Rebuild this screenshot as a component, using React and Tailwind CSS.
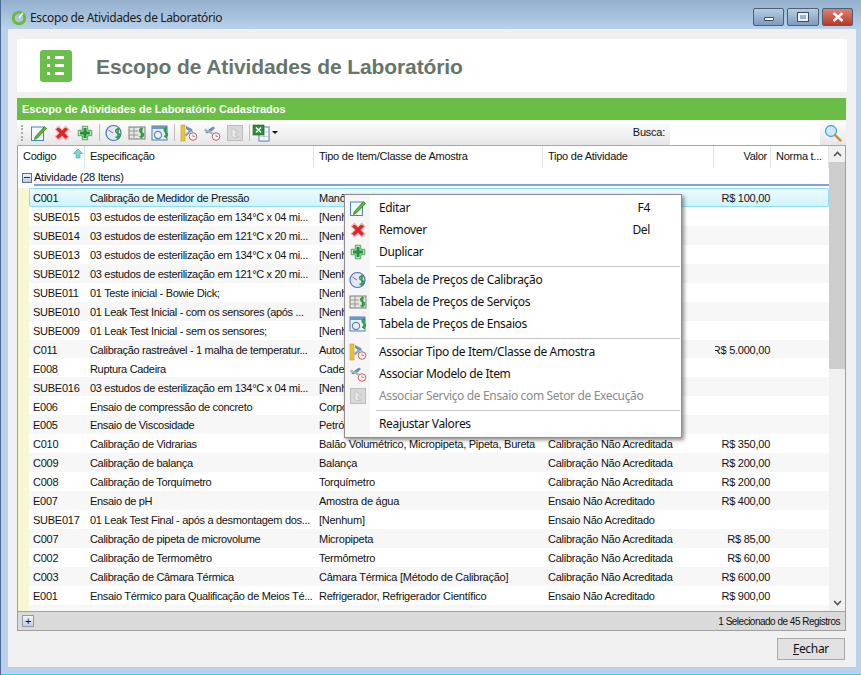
import React from 'react';

const rows = [
  ['C001', 'Calibração de Medidor de Pressão', 'Manômetro', 'Calibração Não Acreditada', 'R$ 100,00'],
  ['SUBE015', '03 estudos de esterilização em 134°C x 04 mi...', '[Nenhum]', '', ''],
  ['SUBE014', '03 estudos de esterilização em 121°C x 20 mi...', '[Nenhum]', '', ''],
  ['SUBE013', '03 estudos de esterilização em 134°C x 04 mi...', '[Nenhum]', '', ''],
  ['SUBE012', '03 estudos de esterilização em 121°C x 20 mi...', '[Nenhum]', '', ''],
  ['SUBE011', '01 Teste inicial - Bowie Dick;', '[Nenhum]', '', ''],
  ['SUBE010', '01 Leak Test Inicial - com os sensores (após ...', '[Nenhum]', '', ''],
  ['SUBE009', '01 Leak Test Inicial - sem os sensores;', '[Nenhum]', '', ''],
  ['C011', 'Calibração rastreável - 1 malha de temperatur...', 'Autoclave', '', 'R$ 5.000,00'],
  ['E008', 'Ruptura Cadeira', 'Cadeira', '', ''],
  ['SUBE016', '03 estudos de esterilização em 134°C x 04 mi...', '[Nenhum]', '', ''],
  ['E006', 'Ensaio de compressão de concreto', 'Corpo de Prova', '', ''],
  ['E005', 'Ensaio de Viscosidade', 'Petróleo', '', ''],
  ['C010', 'Calibração de Vidrarias', 'Balão Volumétrico, Micropipeta, Pipeta, Bureta', 'Calibração Não Acreditada', 'R$ 350,00'],
  ['C009', 'Calibração de balança', 'Balança', 'Calibração Não Acreditada', 'R$ 200,00'],
  ['C008', 'Calibração de Torquímetro', 'Torquímetro', 'Calibração Não Acreditada', 'R$ 200,00'],
  ['E007', 'Ensaio de pH', 'Amostra de água', 'Ensaio Não Acreditado', 'R$ 400,00'],
  ['SUBE017', '01 Leak Test Final - após a desmontagem dos...', '[Nenhum]', 'Ensaio Não Acreditado', ''],
  ['C007', 'Calibração de pipeta de microvolume', 'Micropipeta', 'Calibração Não Acreditada', 'R$ 85,00'],
  ['C002', 'Calibração de Termomêtro', 'Termômetro', 'Calibração Não Acreditada', 'R$ 60,00'],
  ['C003', 'Calibração de Câmara Térmica', 'Câmara Térmica [Método de Calibração]', 'Calibração Não Acreditada', 'R$ 600,00'],
  ['E001', 'Ensaio Térmico para Qualificação de Meios Té...', 'Refrigerador, Refrigerador Científico', 'Ensaio Não Acreditado', 'R$ 900,00'],
  ['C006', 'Calibração de Microscópio Tipo', 'Microscópio Tipo', 'Calibração Não Acreditada', 'R$ 80,00'],
];

function EditIcon() {
  return (
    <svg width="18" height="18" viewBox="0 0 18 18">
      <rect x="1.5" y="3" width="12" height="13.5" fill="#f2f8fd" stroke="#4f86b8" />
      <path d="M5 13 L14.5 2.5 L16.5 4.5 L7 14.5 L4.5 15.5 Z" fill="#5cb531" stroke="#2e7d1b" strokeWidth="0.7" />
    </svg>
  );
}

function RemoveIcon() {
  return (
    <svg width="18" height="18" viewBox="-1 -1 20 20">
      <path d="M1.5 5 L5 1.5 L9 5.5 L13 1.5 L16.5 5 L12.5 9 L16.5 13 L13 16.5 L9 12.5 L5 16.5 L1.5 13 L5.5 9 Z" fill="#dd2428" stroke="#f3b1ae" strokeWidth="1.2" strokeLinejoin="round" />
    </svg>
  );
}

function AddIcon() {
  return (
    <svg width="18" height="18" viewBox="-1 -1 20 20">
      <path d="M6 1.5 H12 V6 H16.5 V12 H12 V16.5 H6 V12 H1.5 V6 H6 Z" fill="#c4e8c5" stroke="#3c8f49" strokeWidth="0.9" strokeLinejoin="round" />
      <path d="M7.3 3.5 H10.7 V7.3 H14.5 V10.7 H10.7 V14.5 H7.3 V10.7 H3.5 V7.3 H7.3 Z" fill="#23923a" />
    </svg>
  );
}

function CalibPriceIcon() {
  return (
    <svg width="18" height="18" viewBox="0 0 18 18">
      <circle cx="8.5" cy="9" r="7.5" fill="#dfe9f8" stroke="#4a73c2" strokeWidth="1.2" />
      <path d="M8 9 L3.5 6" stroke="#c2565a" strokeWidth="1" />
      <path d="M14.5 5.5 C11.5 4.5 10 6 11 8 C12 10 15 9 15 11.5 C15 13.5 12.5 14 10.5 13 M13 4 V15" fill="none" stroke="#2f9a43" strokeWidth="1.6" />
    </svg>
  );
}

function ServicePriceIcon() {
  return (
    <svg width="18" height="18" viewBox="0 0 18 18">
      <rect x="1" y="3" width="16" height="12" fill="#e6e6e2" stroke="#7d7d78" />
      <path d="M1 7 H10 M1 11 H10 M6 3 V15" stroke="#9a9a94" />
      <path d="M15 5 C12.5 4.5 11 5.5 12 7.5 C13 9 15.5 9 15.5 11 C15.5 13 13 13 11.5 12.5 M13.5 3.5 V14.5" fill="none" stroke="#2f9a43" strokeWidth="1.6" />
    </svg>
  );
}

function EnsaioPriceIcon() {
  return (
    <svg width="18" height="18" viewBox="0 0 18 18">
      <rect x="1" y="2" width="15" height="14" fill="#e9f1fa" stroke="#4e7db5" />
      <rect x="1" y="2" width="15" height="3" fill="#6d97c9" />
      <circle cx="7" cy="11" r="3.6" fill="none" stroke="#5c83bb" strokeWidth="1.2" />
      <path d="M16 4.5 C13.5 4 12.5 5.5 13.5 7 C14.5 8.5 16.5 8.5 16.5 10.5 C16.5 12 14.5 12.5 13 12 M15 3 V14" fill="none" stroke="#2f9a43" strokeWidth="1.5" />
    </svg>
  );
}

function ClockBadge() {
  return (
    <>
      <circle cx="13" cy="12.5" r="3.8" fill="#f4f4f4" stroke="#c9605e" strokeWidth="1" />
      <path d="M13 10.5 V12.5 H15" fill="none" stroke="#8a8a8a" strokeWidth="0.8" />
    </>
  );
}

function AssocTipoIcon() {
  return (
    <svg width="18" height="18" viewBox="0 0 18 18">
      <rect x="1" y="1" width="4" height="16" fill="#edc23b" stroke="#c79a24" strokeWidth="0.6" />
      <path d="M6 2 L12 5 L13 8 L9 7 L6 5 Z" fill="#6f8fb4" />
      <path d="M5.5 11.5 L10.5 7" stroke="#8fa7c4" strokeWidth="2.4" />
      <ClockBadge />
    </svg>
  );
}

function AssocModeloIcon() {
  return (
    <svg width="18" height="18" viewBox="0 0 18 18">
      <path d="M2 8 L10 2.5 L12 4 L8.5 7.5 L4 9.5 Z" fill="#6f8fb4" />
      <path d="M1.5 5.5 L9.5 9.5" stroke="#a4b6cc" strokeWidth="2.4" />
      <ClockBadge />
    </svg>
  );
}

function AssocServicoIcon() {
  return (
    <svg width="18" height="18" viewBox="0 0 18 18">
      <rect x="1.5" y="1.5" width="15" height="15" fill="#d8d8d8" stroke="#bdbdbd" />
      <path d="M6 5 H9 V7 H12 V9 H9 V12 H12 V13.5 H7.5 L6 12 Z" fill="#ececec" stroke="#b5b5b5" strokeWidth="0.6" />
    </svg>
  );
}

function ExcelIcon() {
  return (
    <svg width="20" height="20" viewBox="0 0 20 20">
      <rect x="7" y="4" width="10" height="14" fill="#fff" stroke="#5a7ea8" />
      <path d="M12 4 V18 M7 9 H17 M7 13.5 H17" stroke="#a7bdd5" strokeWidth="0.7" />
      <rect x="1" y="2" width="11" height="10" fill="#2e8b3a" stroke="#1c6427" strokeWidth="0.6" />
      <path d="M4 4.5 L9 9.5 M9 4.5 L4 9.5" stroke="#fff" strokeWidth="1.4" />
    </svg>
  );
}

function Magnifier() {
  return (
    <svg width="18" height="18" viewBox="0 0 18 18">
      <circle cx="7" cy="7" r="5.5" fill="#cbeaf8" stroke="#4ba4cf" strokeWidth="1.3" />
      <path d="M11 11 L16.5 16.5" stroke="#c58a3a" strokeWidth="2.4" strokeLinecap="round" />
    </svg>
  );
}

function ToolSep() {
  return <div className="ml-[3px] mr-[2px] h-[17px] w-px bg-[#bdbdbd]" />;
}

function ToolBtn({ children }) {
  return <div className="flex w-[23px] items-center justify-center">{children}</div>;
}

function WinBtn({ children, className }) {
  return (
    <div className={'flex h-[18px] items-center justify-center rounded-[2px] border border-[#4f5f74] ' + className}>
      {children}
    </div>
  );
}

function MenuItem({ icon, label, shortcut, disabled }) {
  return (
    <div className="flex h-[22px] items-center">
      <div className="flex w-[26px] shrink-0 items-center justify-center">{icon}</div>
      <span className={'ml-[8px] flex-1 ' + (disabled ? 'text-[#8a8a8a]' : 'text-[#111]')}>{label}</span>
      {shortcut && <span className="mr-[31px] text-[#111]">{shortcut}</span>}
    </div>
  );
}

function MenuSep() {
  return (
    <div className="flex h-[6px] items-center">
      <div className="ml-[31px] h-px w-[304px] bg-[#c8c8c8]" />
    </div>
  );
}

export default function App() {
  return (
    <div className="flex h-[675px] w-[861px] flex-col overflow-hidden border-l border-[#4a6a94] bg-[#b9d1ea] font-['Liberation_Sans',sans-serif] text-[11px] tracking-[-0.25px] text-[#111]">
      {/* barra de titulo */}
      <div className="flex h-[29px] shrink-0 items-center bg-gradient-to-b from-[#93afcd] to-[#b9d1ea] pl-[10px] pr-[8px] pt-[7px]">
        <svg width="16" height="16" viewBox="0 0 16 16">
          <circle cx="8" cy="8" r="5.8" fill="none" stroke="#6dbb3c" strokeWidth="3" />
          <path d="M8 8 L12 3" stroke="#f4fbe9" strokeWidth="1.5" />
        </svg>
        <span className="ml-[3px] font-['Noto_Sans',sans-serif] text-[12px] tracking-[-0.37px] text-[#1b1b1b]">Escopo de Atividades de Laboratório</span>
        <div className="-mt-[2px] ml-auto flex gap-[3px]">
          <WinBtn className="w-[31px] bg-gradient-to-b from-[#b7cde3] to-[#7e9cbd]">
            <div className="mt-[4px] h-[4px] w-[10px] rounded-[1px] border border-[#3c4c60] bg-white" />
          </WinBtn>
          <WinBtn className="w-[32px] bg-gradient-to-b from-[#b7cde3] to-[#7e9cbd]">
            <div className="h-[8px] w-[10px] border-[2px] border-[#eef3f8] outline outline-1 outline-[#3c4c60]" />
          </WinBtn>
          <WinBtn className="w-[31px] bg-gradient-to-b from-[#df7f71] to-[#b53a28]">
            <svg width="12" height="10" viewBox="0 0 12 10">
              <path d="M1.5 1 L10.5 9 M10.5 1 L1.5 9" stroke="#fff" strokeWidth="2.4" />
            </svg>
          </WinBtn>
        </div>
      </div>

      <div className="mb-[7px] ml-[7px] mr-[5px] flex min-h-0 flex-1 flex-col bg-[#f0f0f0] pl-[9px] pr-[9px] pt-[10px]">
        {/* cabecalho */}
        <div className="flex h-[53px] shrink-0 items-center bg-white pl-[23px]">
          <div className="flex h-[32px] w-[32px] flex-col justify-center gap-[5px] rounded-[3px] bg-[#6abf4b] pl-[7px] pr-[8px]">
            {[0, 1, 2].map((i) => (
              <div key={i} className="flex gap-[2px]">
                <div className="h-[3px] w-[3px] bg-white" />
                <div className="ml-[3px] h-[3px] flex-1 bg-white" />
              </div>
            ))}
          </div>
          <h1 className="ml-[24px] mt-[2px] text-[21px] font-bold tracking-[-0.1px] text-[#65756c]">Escopo de Atividades de Laboratório</h1>
        </div>

        <div className="mt-[6px] flex min-h-0 flex-1 flex-col pr-[1px]">
          <div className="flex h-[22px] shrink-0 items-center bg-[#6abd45] pl-[5px] text-[11px] font-bold tracking-normal text-white">
            Escopo de Atividades de Laboratório Cadastrados
          </div>

          {/* barra de ferramentas */}
          <div className="flex h-[26px] shrink-0 items-center border-b border-[#a8a8a8] bg-gradient-to-b from-white to-[#e6e6e6] pl-[4px]">
            <div className="mr-[4px] h-[16px] w-[2px] border-l-2 border-dotted border-[#aaa]" />
            <ToolBtn><EditIcon /></ToolBtn>
            <ToolBtn><RemoveIcon /></ToolBtn>
            <ToolBtn><AddIcon /></ToolBtn>
            <ToolSep />
            <ToolBtn><CalibPriceIcon /></ToolBtn>
            <ToolBtn><ServicePriceIcon /></ToolBtn>
            <ToolBtn><EnsaioPriceIcon /></ToolBtn>
            <ToolSep />
            <ToolBtn><AssocTipoIcon /></ToolBtn>
            <ToolBtn><AssocModeloIcon /></ToolBtn>
            <ToolBtn><AssocServicoIcon /></ToolBtn>
            <ToolSep />
            <ExcelIcon />
            <span className="h-0 w-0 border-x-[3px] border-t-[3px] border-x-transparent border-t-[#111]" />
            <span className="ml-auto text-[#111]">Busca:</span>
            <div className="ml-[5px] h-[24px] w-[150px] bg-white" />
            <div className="flex w-[26px] justify-center"><Magnifier /></div>
          </div>

          {/* grade */}
          <div className="flex min-h-0 flex-1 flex-col border-x border-b border-[#a0a0a0]">
            <div className="flex min-h-0 flex-1">
              <div className="flex min-w-0 flex-1 flex-col">
                <div className="flex h-[22px] shrink-0 bg-white">
                  <div className="relative w-[67px] border-r border-[#e2e2e2] pl-[5px] pt-[2px]">
                    Codigo
                    <svg className="absolute left-[55px] top-[2px]" width="10" height="11" viewBox="0 0 10 11">
                      <path d="M5 1 L9.5 5.5 H7 V10 H3 V5.5 H0.5 Z" fill="#7fd6dc" stroke="#4aa5b5" strokeWidth="0.7" />
                    </svg>
                  </div>
                  <div className="w-[229px] border-r border-[#e2e2e2] pl-[5px] pt-[2px]">Especificação</div>
                  <div className="w-[229px] border-r border-[#e2e2e2] pl-[5px] pt-[2px]">Tipo de Item/Classe de Amostra</div>
                  <div className="w-[171px] border-r border-[#e2e2e2] pl-[5px] pt-[2px]">Tipo de Atividade</div>
                  <div className="w-[57px] border-r border-[#e2e2e2] pr-[3px] pt-[2px] text-right">Valor</div>
                  <div className="flex-1 border-r border-[#e2e2e2] pl-[5px] pt-[2px]">Norma t...</div>
                </div>

                <div className="flex h-[20px] shrink-0 items-start bg-white pl-[4px]">
                  <div className="flex h-[18px] w-full items-center">
                    <div className="mt-[1px] flex h-[10px] w-[10px] shrink-0 items-center justify-center border border-[#5a6f96] bg-gradient-to-b from-[#eef2f8] to-[#bcc9de]">
                      <div className="h-px w-[6px] bg-[#23324d]" />
                    </div>
                    <span className="ml-[2px] flex h-full flex-1 items-center border-b-2 border-[#7fa2de] pt-[2px]">Atividade (28 Itens)</span>
                  </div>
                </div>

                <div className="flex min-h-0 flex-1 overflow-hidden bg-white">
                  <div className="w-[11px] shrink-0 bg-[#f7f7d4]" />
                  <div className="min-w-0 flex-1">
                    {rows.map((row, i) => (
                      <div
                        key={row[0]}
                        className={
                          'flex h-[18.95px] items-center pt-[2px] ' +
                          (i === 0
                            ? 'rounded-[2px] bg-gradient-to-b from-[#effbff] to-[#cff2fd] shadow-[inset_0_0_0_1px_#8fdcf5]'
                            : i % 2 === 1
                              ? 'bg-white'
                              : 'bg-[#f7f7f7]')
                        }
                      >
                        <div className="w-[57px] shrink-0 truncate pl-[4px]">{row[0]}</div>
                        <div className="w-[229px] shrink-0 truncate pl-[4px] tracking-[-0.32px]">{row[1]}</div>
                        <div className="w-[229px] shrink-0 truncate pl-[4px]">{row[2]}</div>
                        <div className="w-[171px] shrink-0 truncate pl-[4px]">{row[3]}</div>
                        <div className="flex w-[57px] shrink-0 justify-end overflow-hidden pr-[2px]">
                          <span className="shrink-0">{row[4]}</span>
                        </div>
                      </div>
                    ))}
                  </div>
                </div>
              </div>

              {/* barra de rolagem */}
              <div className="flex w-[16px] shrink-0 flex-col bg-[#f0f0f0]">
                <div className="flex h-[16px] items-center justify-center">
                  <svg width="9" height="6" viewBox="0 0 9 6"><path d="M1 5 L4.5 1.5 L8 5" fill="none" stroke="#555" strokeWidth="1.6" /></svg>
                </div>
                <div className="h-[207px] bg-[#cdcdcd]" />
                <div className="mt-auto flex h-[17px] items-center justify-center">
                  <svg width="9" height="6" viewBox="0 0 9 6"><path d="M1 1 L4.5 4.5 L8 1" fill="none" stroke="#555" strokeWidth="1.6" /></svg>
                </div>
              </div>
            </div>

            {/* rodape */}
            <div className="flex h-[19px] shrink-0 items-center border-t border-[#a0a0a0] bg-[#dadada] pl-[4px] pr-[5px] text-[10px] tracking-[-0.5px]">
              <div className="flex h-[12px] w-[12px] items-center justify-center border border-[#8d9bb3] bg-gradient-to-b from-[#f2f4f8] to-[#c5cfe0] text-[11px] leading-none">+</div>
              <span className="ml-auto">1 Selecionado de 45 Registros</span>
            </div>
          </div>
        </div>

        <div className="flex h-[36px] shrink-0 items-center justify-end pr-[2px]">
          <div className="flex h-[22px] w-[68px] items-center justify-center border border-[#a8a8a8] bg-[#e1e1e1] font-['Noto_Sans',sans-serif] text-[12px] tracking-[-0.3px]">
            <span><span className="underline">F</span>echar</span>
          </div>
        </div>
      </div>
      <div className="h-px shrink-0 bg-[#2fd3ee]" />

      {/* menu de contexto */}
      <div className="absolute left-[344px] top-[194px] w-[338px] border border-[#8e8e8e] bg-[linear-gradient(90deg,#f6f6f6_25px,#fff_25px)] py-[2px] font-['Noto_Sans',sans-serif] text-[12px] tracking-[-0.35px] shadow-[2px_2px_4px_rgba(0,0,0,0.45)]">
        <MenuItem icon={<EditIcon />} label="Editar" shortcut="F4" />
        <MenuItem icon={<RemoveIcon />} label="Remover" shortcut="Del" />
        <MenuItem icon={<AddIcon />} label="Duplicar" />
        <MenuSep />
        <MenuItem icon={<CalibPriceIcon />} label="Tabela de Preços de Calibração" />
        <MenuItem icon={<ServicePriceIcon />} label="Tabela de Preços de Serviços" />
        <MenuItem icon={<EnsaioPriceIcon />} label="Tabela de Preços de Ensaios" />
        <MenuSep />
        <MenuItem icon={<AssocTipoIcon />} label="Associar Tipo de Item/Classe de Amostra" />
        <MenuItem icon={<AssocModeloIcon />} label="Associar Modelo de Item" />
        <MenuItem icon={<AssocServicoIcon />} label="Associar Serviço de Ensaio com Setor de Execução" disabled />
        <MenuSep />
        <MenuItem label="Reajustar Valores" />
      </div>
    </div>
  );
}
